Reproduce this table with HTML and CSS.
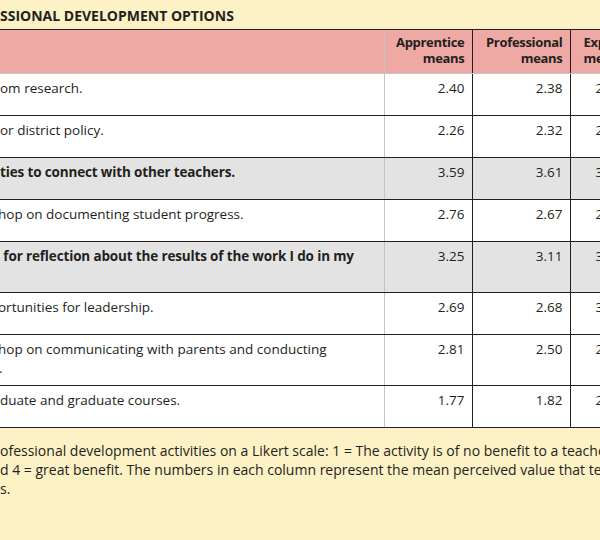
FILE: index.html
```html
<!DOCTYPE html>
<html>
<head>
<meta charset="utf-8">
<link rel="stylesheet" href="styles.css">
</head>
<body>
<div class="page">
  <h1 class="title">SSIONAL DEVELOPMENT OPTIONS</h1>
  <table class="grid">
    <colgroup>
      <col class="c-item"><col class="c-num"><col class="c-num2"><col class="c-num3">
    </colgroup>
    <thead>
      <tr class="head">
        <th class="item"></th>
        <th class="num light">Apprentice<br>means</th>
        <th class="num">Professional<br>means</th>
        <th class="num last">Exp<br>me</th>
      </tr>
    </thead>
    <tbody>
      <tr class="r1"><td class="item">om research.</td><td class="num light">2.40</td><td class="num">2.38</td><td class="num last">2</td></tr>
      <tr class="r1"><td class="item">or district policy.</td><td class="num light">2.26</td><td class="num">2.32</td><td class="num last">2</td></tr>
      <tr class="r1 hi"><td class="item">ties to connect with other teachers.</td><td class="num light">3.59</td><td class="num">3.61</td><td class="num last">3</td></tr>
      <tr class="r1"><td class="item cut">hop on documenting student progress.</td><td class="num light">2.76</td><td class="num">2.67</td><td class="num last">2</td></tr>
      <tr class="r2 hi"><td class="item">&nbsp;for reflection about the results of the work I do in my</td><td class="num light">3.25</td><td class="num">3.11</td><td class="num last">3</td></tr>
      <tr class="r1"><td class="item cut">ortunities for leadership.</td><td class="num light">2.69</td><td class="num">2.68</td><td class="num last">3</td></tr>
      <tr class="r2"><td class="item cut">hop on communicating with parents and conducting<br><span class="dot">.</span></td><td class="num light">2.81</td><td class="num">2.50</td><td class="num last">2</td></tr>
      <tr class="r1"><td class="item">duate and graduate courses.</td><td class="num light">1.77</td><td class="num">1.82</td><td class="num last">2</td></tr>
    </tbody>
  </table>
  <p class="note">ofessional development activities on a Likert scale: 1 = The activity is of no benefit to a teacher<br>d 4 = great benefit. The numbers in each column represent the mean perceived value that te<br>s.</p>
</div>
</body>
</html>
```

FILE: styles.css
```css
html, body {
  margin: 0;
  padding: 0;
  background: #fdf1c6;
}
.page {
  width: 600px;
  height: 540px;
  overflow: hidden;
  background: #fdf1c6;
  font-family: "Open Sans", "Liberation Sans", sans-serif;
  color: #231f20;
}
.title {
  margin: 0;
  padding: 7px 0 0 0;
  height: 22px;
  font-size: 14px;
  line-height: 18px;
  font-weight: 700;
  white-space: nowrap;
  border-bottom: 1px solid #231f20;
}
.grid {
  table-layout: fixed;
  border-collapse: collapse;
  width: 680px;
  font-size: 13.5px;
}
.c-item { width: 384px; }
.c-num { width: 88px; }
.c-num2 { width: 98px; }
.c-num3 { width: 110px; }
.head th {
  background: #eea9a4;
  height: 39px;
  padding: 4px 7px 0 0;
  vertical-align: top;
  font-size: 13px;
  letter-spacing: -0.3px;
  font-weight: 700;
  line-height: 16px;
  text-align: right;
  border-bottom: 1px solid #c9c3c3;
}
.grid td {
  background: #ffffff;
  vertical-align: top;
  padding: 5px 7px 0 0;
  line-height: 19px;
  border-bottom: 1px solid #231f20;
  white-space: nowrap;
}
.r1 td { height: 36px; }
.r2 td { height: 45px; }
.grid .hi td { background: #e3e3e3; }
.grid .hi td.item { font-weight: 700; letter-spacing: -0.15px; }
.grid .item { text-align: left; padding-left: 0; overflow: hidden; }
.grid .cut { text-indent: -2px; }
.grid .num { text-align: right; border-right: 1px solid #231f20; }
.grid .num.light { border-left: 1px solid #c4c4c4; }
.grid .num.last { text-align: left; padding-left: 13px; border-right: 0; }
.grid tbody .num.last { padding-left: 25px; }
.dot { display: inline-block; padding-left: 1px; }
.note {
  margin: 0;
  padding: 13px 0 0 0;
  font-size: 14px;
  line-height: 19px;
  white-space: nowrap;
}
```
